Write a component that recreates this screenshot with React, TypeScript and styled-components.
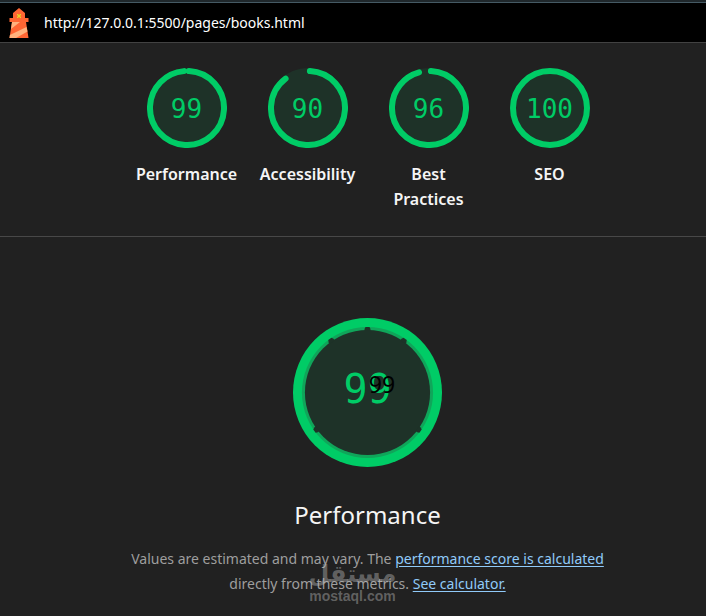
import React from "react";
import styled, { createGlobalStyle } from "styled-components";

const GREEN = "#00cc66";

const GlobalStyle = createGlobalStyle`
  *, *::before, *::after { box-sizing: border-box; }
  html { background: #212121; }
  body {
    margin: 0;
    color: #f5f5f5;
    font-family: "Noto Sans", "Open Sans", sans-serif;
    overflow: hidden;
  }
`;

const Page = styled.div`
  min-height: 100vh;
  background: #212121;
`;

const TopBar = styled.header`
  display: flex;
  align-items: center;
  gap: 12px;
  height: 43px;
  padding: 4px 6px 0;
  background: #000;
  border-bottom: 1px solid #424242;
  box-shadow: inset 0 2px 0 #1f272b, inset 0 3px 0 #455a64;
`;

const Address = styled.a`
  color: #fff;
  font-size: 14px;
  line-height: 20px;
  text-decoration: none;
`;

const Scores = styled.nav`
  display: flex;
  justify-content: center;
  padding: 25px 0 24px 30px;
  border-bottom: 1px solid #484848;
`;

const ScoreLink = styled.a`
  display: flex;
  flex-direction: column;
  align-items: center;
  gap: 14px;
  width: 121px;
  color: inherit;
  text-decoration: none;
`;

const ScoreLabel = styled.span`
  max-width: 110px;
  font-size: 16px;
  font-weight: 600;
  line-height: 25px;
  text-align: center;
`;

const BestLabel = styled(ScoreLabel)`
  max-width: 80px;
`;

const Dial = styled.div<{ $size: number }>`
  display: grid;
  place-items: center;
  width: ${(p) => p.$size}px;
  height: ${(p) => p.$size}px;

  & > * { grid-area: 1 / 1; }
  svg { display: block; width: 100%; height: 100%; }
`;

const ScoreValue = styled.span<{ $large?: boolean }>`
  padding: ${(p) => (p.$large ? "0 0 8px" : "2px 0 0")};
  color: ${GREEN};
  font-family: "DejaVu Sans Mono", monospace;
  font-size: ${(p) => (p.$large ? 40 : 26)}px;
  line-height: 1;
`;

const Total = styled.span`
  padding: 0 0 16px 29px;
  color: #000;
  font-size: 23px;
  line-height: 1;
`;

const Category = styled.main`
  display: flex;
  flex-direction: column;
  align-items: center;
  padding: 81px 0 20px 29px;
`;

const Title = styled.h1`
  margin: 30px 0 13px;
  font-size: 24px;
  font-weight: 400;
  line-height: 36px;
`;

const Description = styled.p`
  max-width: 500px;
  margin: 0;
  color: #9e9e9e;
  font-size: 14px;
  line-height: 25px;
  text-align: center;
`;

const Notes = styled.div`
  position: relative;
`;

const TextLink = styled.a`
  color: #90caf9;
  text-decoration: underline;
  text-underline-offset: 2px;
`;

const Watermark = styled.div`
  position: absolute;
  top: 15px;
  left: 50%;
  width: 116px;
  margin-left: -73px;
  color: rgba(190, 190, 190, 0.42);
  font-family: "Liberation Sans", sans-serif;
  font-size: 14px;
  font-weight: 700;
  line-height: 16px;
  text-align: center;
  pointer-events: none;
`;

const WatermarkName = styled.div`
  height: 27px;
  font-family: "DejaVu Sans", sans-serif;
  font-size: 24px;
  line-height: 27px;
`;

function Lighthouse() {
  return (
    <svg width="26" height="32" viewBox="0 0 26 32" aria-hidden="true">
      <path d="M13 1 19 6v5h3.500v4H20l2.500 16h-19L6 15H3.500v-4H7V6z" fill="#ff6633" />
      <path d="M11 7h4v4h-4z" fill="#f0a020" />
      <path d="m11 7 4 4M15 7l-4 4" stroke="#e5d030" fill="none" />
      <path d="M6 15h8L5 22zM20.500 20l1 4.500L10 31H3.500l.4-3z" fill="#ffb27d" />
    </svg>
  );
}

function Gauge({ score }: { score: number }) {
  const gap = score === 100 ? 0 : 1;
  return (
    <Dial $size={80}>
      <svg viewBox="0 0 80 80" aria-hidden="true">
        <circle cx="40" cy="40" r="40" fill="#1e3228" />
        <circle
          cx="40"
          cy="40"
          r="37"
          fill="none"
          stroke={GREEN}
          strokeWidth="6"
          strokeLinecap={gap ? "round" : "butt"}
          pathLength="100"
          strokeDasharray={`${gap ? score - 1.2 : 100} 100`}
          transform={`rotate(${gap ? -87 : -90} 40 40)`}
        />
      </svg>
      <ScoreValue>{score}</ScoreValue>
    </Dial>
  );
}

function DetailGauge() {
  const notches = [0, 35, 126, 234, 325];
  return (
    <Dial $size={149}>
      <svg viewBox="0 0 150 150" aria-hidden="true">
        <circle cx="75" cy="75" r="75" fill={GREEN} />
        <circle cx="75" cy="75" r="66" fill="#10a55a" />
        <circle cx="75" cy="75" r="63" fill="#1e3228" />
        {notches.map((angle) => (
          <path
            key={angle}
            d="M72 13V11L73 9H77L78 11V13z"
            fill="#1e3228"
            transform={`rotate(${angle} 75 75)`}
          />
        ))}
      </svg>
      <ScoreValue $large>99</ScoreValue>
      <Total>99</Total>
    </Dial>
  );
}

export default function App() {
  return (
    <Page>
      <GlobalStyle />
      <TopBar>
        <Lighthouse />
        <Address href="http://127.0.0.1:5500/pages/books.html">
          http://127.0.0.1:5500/pages/books.html
        </Address>
      </TopBar>
      <Scores>
        <ScoreLink href="#performance">
          <Gauge score={99} />
          <ScoreLabel>Performance</ScoreLabel>
        </ScoreLink>
        <ScoreLink href="#accessibility">
          <Gauge score={90} />
          <ScoreLabel>Accessibility</ScoreLabel>
        </ScoreLink>
        <ScoreLink href="#best-practices">
          <Gauge score={96} />
          <BestLabel>Best Practices</BestLabel>
        </ScoreLink>
        <ScoreLink href="#seo">
          <Gauge score={100} />
          <ScoreLabel>SEO</ScoreLabel>
        </ScoreLink>
      </Scores>
      <Category id="performance">
        <DetailGauge />
        <Title>Performance</Title>
        <Notes>
          <Description>
            Values are estimated and may vary. The{" "}
            <TextLink href="#score">performance score is calculated</TextLink>{" "}
            directly from these metrics.{" "}
            <TextLink href="#calculator">See calculator.</TextLink>
          </Description>
          <Watermark>
            <WatermarkName lang="ar" dir="rtl">مستقل</WatermarkName>
            mostaql.com
          </Watermark>
        </Notes>
      </Category>
    </Page>
  );
}
